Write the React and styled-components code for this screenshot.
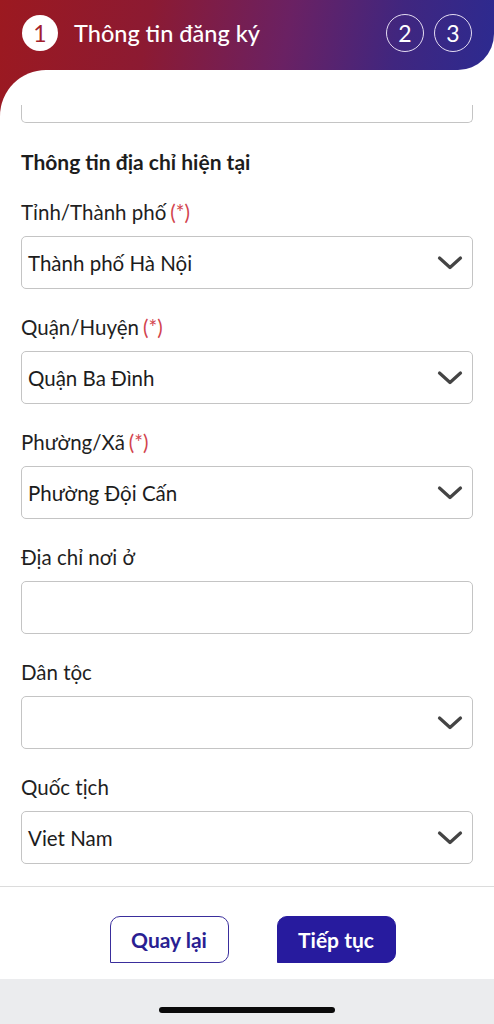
import React from "react";
import styled, { createGlobalStyle } from "styled-components";

const GlobalStyle = createGlobalStyle`
  body {
    margin: 0;
    background: #ffffff;
    font-family: Lato, "Noto Sans", sans-serif;
  }
`;

const HEADER_BG =
  "linear-gradient(100deg, #9c1920 0%, #8c1a32 30%, #6a2163 58%, #40267f 80%, #2c2a90 100%)";

const Screen = styled.div`
  width: 494px;
  height: 1024px;
  display: flex;
  flex-direction: column;
  overflow: hidden;
  background: #fff;
`;

const Header = styled.div`
  height: 70px;
  flex-shrink: 0;
  display: flex;
  align-items: center;
  padding: 0 22px 4px 22px;
  box-sizing: border-box;
  background: ${HEADER_BG};
  border-bottom-right-radius: 36px;
`;

const StepCircle = styled.div`
  width: ${(p) => (p.active ? "36px" : "38px")};
  height: ${(p) => (p.active ? "36px" : "38px")};
  border-radius: 50%;
  display: flex;
  align-items: center;
  justify-content: center;
  font-size: 23px;
  box-sizing: border-box;
  background: ${(p) => (p.active ? "#fff" : "transparent")};
  color: ${(p) => (p.active ? "#a3202c" : "#fff")};
  border: ${(p) => (p.active ? "none" : "1.5px solid #e4dcf2")};
`;

const HeaderTitle = styled.div`
  margin-left: 16px;
  flex: 1;
  color: #fff;
  font-size: 23.5px;
  font-weight: 500;
`;

const Steps = styled.div`
  display: flex;
  gap: 10px;
`;

const BodyWrap = styled.div`
  flex: 1;
  min-height: 0;
  display: flex;
  background: ${HEADER_BG};
  background-size: 494px 120px;
  background-position: 0 -70px;
  background-repeat: no-repeat;
`;

const Card = styled.div`
  flex: 1;
  min-width: 0;
  background: #fff;
  border-top-left-radius: 46px;
  padding-top: 35px;
  display: flex;
  flex-direction: column;
`;

const Scroll = styled.div`
  flex: 1;
  min-height: 0;
  overflow: hidden;
  padding: 0 21px;
`;

/* the field scrolled under the header: only its lower edge shows */
const CutBox = styled.div`
  height: 18px;
  box-sizing: border-box;
  border: 1px solid #c4c4c4;
  border-top: none;
  border-radius: 0 0 5px 5px;
  padding: 0 7px;
  overflow: hidden;
`;

const CutText = styled.div`
  margin-top: -23px;
  font-size: 20px;
  line-height: 24px;
  color: #222;
  white-space: nowrap;
`;

const SectionTitle = styled.div`
  margin-top: 26px;
  font-size: 21px;
  font-weight: 700;
  line-height: 26px;
  color: #1d1d1d;
`;

const Field = styled.div`
  margin-top: ${(p) => (p.first ? "25px" : "26px")};
`;

const Label = styled.div`
  font-size: 20.5px;
  line-height: 24px;
  color: #1f1f1f;
  margin-bottom: 12px;
`;

const Req = styled.span`
  color: #d2434d;
  margin-left: 4px;
`;

const Box = styled.div`
  height: 53px;
  box-sizing: border-box;
  border: 1px solid #c4c4c4;
  border-radius: 5px;
  display: flex;
  align-items: center;
  padding: 0 9px 0 6px;
  font-size: 20.5px;
  color: #1c1c1c;
`;

const Value = styled.div`
  flex: 1;
`;

const Footer = styled.div`
  height: 93px;
  flex-shrink: 0;
  border-top: 1px solid #dcdcdc;
  display: flex;
  justify-content: center;
  padding: 29px 0 0 11px;
  box-sizing: border-box;
  gap: 48px;
`;

const Button = styled.button`
  width: 119px;
  height: 47px;
  box-sizing: border-box;
  border-radius: 10px 10px 10px 0;
  font-family: Lato, "Noto Sans", sans-serif;
  font-size: 21px;
  font-weight: 700;
  cursor: pointer;
  border: 1.5px solid;
  background: ${(p) => (p.primary ? "#271b9e" : "#fff")};
  color: ${(p) => (p.primary ? "#fff" : "#2a1f92")};
  border-color: ${(p) => (p.primary ? "#271b9e" : "#3a2e9c")};
`;

const HomeBar = styled.div`
  height: 45px;
  flex-shrink: 0;
  background: #ebecee;
  display: flex;
  justify-content: center;
  align-items: flex-end;
  padding-bottom: 11px;
  box-sizing: border-box;
`;

const Indicator = styled.div`
  width: 176px;
  height: 6px;
  border-radius: 3px;
  background: #0a0a0a;
`;

const Chevron = () => (
  <svg width="26" height="16" viewBox="0 0 26 16" fill="none">
    <path
      d="M2.5 3 L13 12.5 L23.5 3"
      stroke="#444"
      strokeWidth="3.2"
      strokeLinecap="round"
      strokeLinejoin="round"
    />
  </svg>
);

const fields = [
  { label: "Tỉnh/Thành phố", required: true, value: "Thành phố Hà Nội", select: true },
  { label: "Quận/Huyện", required: true, value: "Quận Ba Đình", select: true },
  { label: "Phường/Xã", required: true, value: "Phường Đội Cấn", select: true },
  { label: "Địa chỉ nơi ở", required: false, value: "", select: false },
  { label: "Dân tộc", required: false, value: "", select: true },
  { label: "Quốc tịch", required: false, value: "Viet Nam", select: true },
];

export default function App() {
  return (
    <>
      <GlobalStyle />
      <Screen>
        <Header>
          <StepCircle active>1</StepCircle>
          <HeaderTitle>Thông tin đăng ký</HeaderTitle>
          <Steps>
            <StepCircle>2</StepCircle>
            <StepCircle>3</StepCircle>
          </Steps>
        </Header>
        <BodyWrap>
          <Card>
            <Scroll>
              <CutBox>
                <CutText>Nguyễn Văn An, Hà Nội, Việt Nam</CutText>
              </CutBox>
              <SectionTitle>Thông tin địa chỉ hiện tại</SectionTitle>
              {fields.map((f, i) => (
                <Field key={f.label} first={i === 0}>
                  <Label>
                    {f.label}
                    {f.required && <Req>(*)</Req>}
                  </Label>
                  <Box>
                    <Value>{f.value}</Value>
                    {f.select && <Chevron />}
                  </Box>
                </Field>
              ))}
            </Scroll>
            <Footer>
              <Button>Quay lại</Button>
              <Button primary>Tiếp tục</Button>
            </Footer>
            <HomeBar>
              <Indicator />
            </HomeBar>
          </Card>
        </BodyWrap>
      </Screen>
    </>
  );
}
